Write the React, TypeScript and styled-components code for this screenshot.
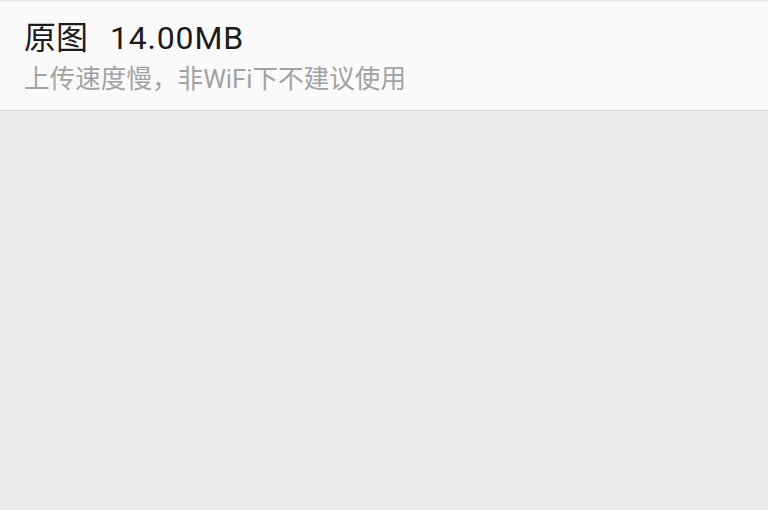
import styled, { createGlobalStyle } from "styled-components";

const GlobalStyle = createGlobalStyle`
  html, body {
    margin: 0;
    padding: 0;
    background: #ebebeb;
  }
  body {
    font-family: Roboto, "Noto Sans CJK SC", sans-serif;
  }
`;

const Page = styled.div`
  width: 768px;
  height: 510px;
  background: #ebebeb;
  overflow: hidden;
`;

const OptionItem = styled.div`
  box-sizing: border-box;
  height: 111px;
  padding: 17px 24px 0;
  background: #fafafa;
  border-top: 1px solid #e4e4e4;
  border-bottom: 1px solid #d6d6d6;
`;

const Title = styled.div`
  display: flex;
  align-items: baseline;
  font-size: 32px;
  line-height: 40px;
  color: #1c1c1c;
`;

const Size = styled.span`
  margin-left: 22px;
  letter-spacing: 0.8px;
`;

const Hint = styled.div`
  margin-top: 5px;
  font-size: 25.6px;
  line-height: 32px;
  color: #a2a2a2;
`;

const App = () => {
  return (
    <Page>
      <GlobalStyle />
      <OptionItem>
        <Title>
          <span>原图</span>
          <Size>14.00MB</Size>
        </Title>
        <Hint>上传速度慢，非WiFi下不建议使用</Hint>
      </OptionItem>
    </Page>
  );
};

export default App;
